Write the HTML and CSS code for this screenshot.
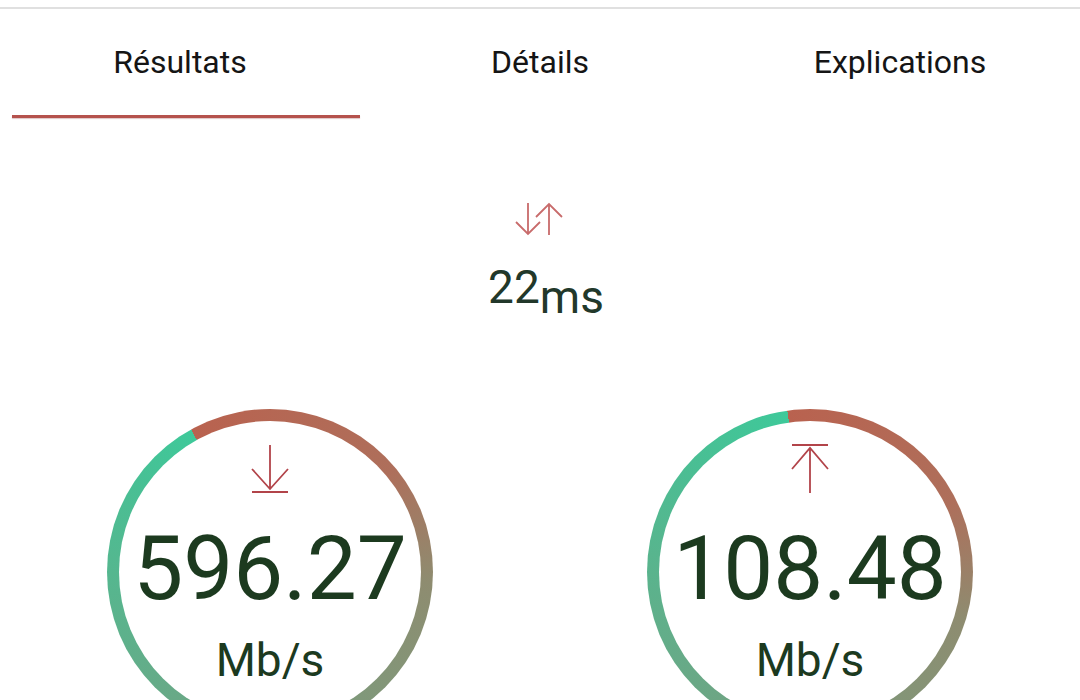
FILE: index.html
```html
<!DOCTYPE html>
<html lang="fr">
<head>
  <meta charset="UTF-8" />
  <title>Résultats du test de débit</title>
  <link rel="stylesheet" href="styles.css">
</head>
<body>
  <div class="topbar"></div>

  <nav class="tabs">
    <div class="tab active">Résultats</div>
    <div class="tab">Détails</div>
    <div class="tab">Explications</div>
  </nav>
  <div class="tab-indicator"></div>

  <section class="ping">
    <svg class="ping-icon" width="50" height="34" viewBox="0 0 50 34">
      <path d="M13 1 V32 M1 20 L13 32 L25 20" />
      <path d="M34 2 V33 M21 15 L34 2 L47 15" />
    </svg>
    <div class="ping-value">22<span class="ping-unit">ms</span></div>
  </section>

  <section class="gauges">
    <div class="gauge gauge-down">
      <div class="gauge-inner">
        <svg class="gauge-icon" width="40" height="50" viewBox="0 0 40 50">
          <path d="M20 1 V45 M2 25 L20 45 L38 25 M2 48 H38" />
        </svg>
        <div class="gauge-value">596.27</div>
        <div class="gauge-unit">Mb/s</div>
      </div>
    </div>
    <div class="gauge gauge-up">
      <div class="gauge-inner">
        <svg class="gauge-icon" width="40" height="50" viewBox="0 0 40 50">
          <path d="M2 1 H38 M20 4 V49 M2 25 L20 4 L38 25" />
        </svg>
        <div class="gauge-value">108.48</div>
        <div class="gauge-unit">Mb/s</div>
      </div>
    </div>
  </section>
</body>
</html>
```

FILE: styles.css
```css
body {
  margin: 0;
  background: #ffffff;
  font-family: Roboto, "Noto Sans", sans-serif;
  overflow: hidden;
}

.topbar {
  height: 7px;
  border-bottom: 2px solid #e0e0e0;
}

/* Onglets */
.tabs {
  display: grid;
  grid-template-columns: repeat(3, 1fr);
  height: 106px;
}
.tab {
  display: flex;
  align-items: center;
  justify-content: center;
  font-size: 32px;
  color: #151515;
}
.tab-indicator {
  width: 348px;
  height: 3px;
  margin-left: 12px;
  background: #b5524d;
  box-shadow: 0 1px 1px rgba(150, 60, 60, 0.3);
}

/* Ping */
.ping {
  display: flex;
  flex-direction: column;
  align-items: center;
  padding-top: 84px;
}
.ping-icon path {
  fill: none;
  stroke: #c86b6b;
  stroke-width: 1.8;
}
.ping-value {
  margin-top: 28px;
  margin-left: 12px;
  font-size: 46px;
  line-height: 1;
  color: #22382a;
}
.ping-unit {
  position: relative;
  top: 10px;
}

/* Jauges */
.gauges {
  display: flex;
  justify-content: space-around;
  margin-top: 99px;
}
.gauge {
  width: 326px;
  height: 326px;
  padding: 12px;
  box-sizing: border-box;
  border-radius: 50%;
}
.gauge-down {
  background: conic-gradient(from -29deg, #b9624f 0%, #ae6f5b 22%, #8e8c70 34%, #80987a 48%, #66ab88 70%, #49bf94 92%, #3ec99a 100%);
}
.gauge-up {
  background: conic-gradient(from -8deg, #b9624f 0%, #ae6f5b 20%, #8e8c70 32%, #80987a 46%, #66ab88 68%, #49bf94 90%, #3ec99a 100%);
}
.gauge-inner {
  width: 100%;
  height: 100%;
  border-radius: 50%;
  background: #ffffff;
  display: flex;
  flex-direction: column;
  align-items: center;
  padding-top: 23px;
  box-sizing: border-box;
}
.gauge-icon path {
  fill: none;
  stroke: #b2444a;
  stroke-width: 1.8;
}
.gauge-value {
  margin-top: 30px;
  font-size: 89px;
  line-height: 1;
  color: #1c3a1f;
}
.gauge-unit {
  margin-top: 24px;
  font-size: 46px;
  line-height: 1;
  color: #1c3a1f;
}
```
